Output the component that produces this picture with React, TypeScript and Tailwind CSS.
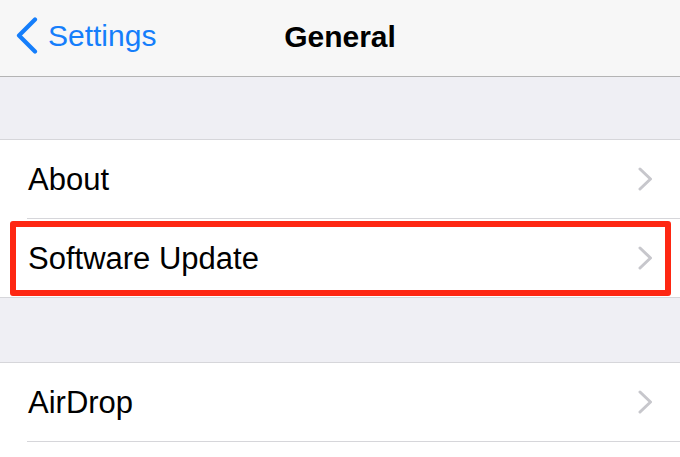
import React from "react";

const Chevron = () => (
  <svg width="15" height="24" viewBox="0 0 15 24" fill="none" className="shrink-0">
    <path d="M2 2 L12.5 12 L2 22" stroke="#c7c7cc" strokeWidth="3" strokeLinecap="round" strokeLinejoin="round" />
  </svg>
);

const Row = ({ label, separator = true }: { label: string; separator?: boolean }) => (
  <div className="pl-[27px] bg-white">
    <div
      className={`flex items-center justify-between pl-px pr-[27px] ${
        separator ? "h-[79px] border-b border-[#d6d6da]" : "h-[78px]"
      }`}
    >
      <span className="text-[31px] leading-none text-black">{label}</span>
      <Chevron />
    </div>
  </div>
);

export default function App() {
  return (
    <div
      className="w-[680px] h-[457px] overflow-hidden bg-white"
      style={{ fontFamily: '"Liberation Sans", Arial, sans-serif' }}
    >
      {/* Nav bar */}
      <div className="relative flex h-[77px] items-center justify-center border-b border-[#b4b4b4] bg-[#f7f7f7] pb-[3px]">
        <div className="absolute left-[16px] top-[17px] flex items-center">
          <svg width="22" height="37" viewBox="0 0 22 37" fill="none">
            <path d="M19 2.5 L3 18.5 L19 34.5" stroke="#157efb" strokeWidth="4.2" strokeLinecap="round" strokeLinejoin="round" />
          </svg>
          <span className="ml-[10px] text-[30px] leading-none text-[#157efb]">Settings</span>
        </div>
        <span className="text-[30px] font-bold leading-none text-black">General</span>
      </div>

      {/* Section gap */}
      <div className="h-[63px] border-b border-[#d6d6da] bg-[#efeff4]" />

      <Row label="About" />
      <div className="relative border-b border-[#d6d6da]">
        <Row label="Software Update" separator={false} />
        <div className="absolute left-[10px] right-[9px] top-[2px] bottom-[1px] rounded-[3px] border-[6px] border-[#fe2712]" />
      </div>

      {/* Section gap */}
      <div className="h-[65px] border-b border-[#d6d6da] bg-[#efeff4]" />

      <Row label="AirDrop" />
    </div>
  );
}
